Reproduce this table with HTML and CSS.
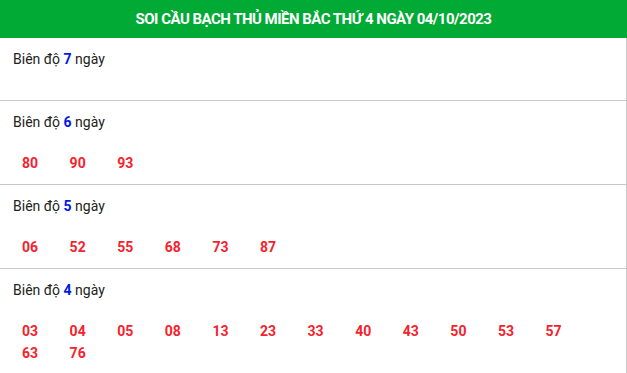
FILE: index.html
```html
<!DOCTYPE html>
<html lang="vi">
<head>
<meta charset="utf-8">
<title>Soi cầu bạch thủ</title>
<link rel="stylesheet" href="styles.css">
</head>
<body>
<div class="box">
  <h2 class="head">SOI CẦU BẠCH THỦ MIỀN BẮC THỨ 4 NGÀY 04/10/2023</h2>
  <div class="content">
    <div class="row">
      <div class="title">Biên độ <b>7</b> ngày</div>
      <div class="nums"></div>
    </div>
    <div class="row">
      <div class="title">Biên độ <b>6</b> ngày</div>
      <div class="nums"><span>80</span><span>90</span><span>93</span></div>
    </div>
    <div class="row">
      <div class="title">Biên độ <b>5</b> ngày</div>
      <div class="nums"><span>06</span><span>52</span><span>55</span><span>68</span><span>73</span><span>87</span></div>
    </div>
    <div class="row">
      <div class="title">Biên độ <b>4</b> ngày</div>
      <div class="nums"><span>03</span><span>04</span><span>05</span><span>08</span><span>13</span><span>23</span><span>33</span><span>40</span><span>43</span><span>50</span><span>53</span><span>57</span><span>63</span><span>76</span></div>
    </div>
  </div>
</div>
</body>
</html>
```
FILE: styles.css
```css
html, body {
  margin: 0;
  padding: 0;
  background: #fff;
  font-family: Roboto, "Liberation Sans", sans-serif;
}
.box {
  width: 627px;
}
.head {
  margin: 0;
  height: 38px;
  line-height: 38px;
  background: #00aa34;
  color: #fff;
  text-align: center;
  font-size: 15px;
  font-weight: 700;
  letter-spacing: -0.52px;
}
.content {
  border-right: 1px solid #c8c8c8;
}
.row {
  padding: 11px 0 10px 13px;
  border-bottom: 1px solid #c8c8c8;
}
.title {
  font-size: 14px;
  line-height: 20px;
  color: #222;
}
.title b {
  color: #0018e0;
  font-weight: 700;
}
.nums {
  margin-top: 21px;
  padding-left: 9px;
  display: flex;
  flex-wrap: wrap;
  row-gap: 1px;
}
.nums span {
  width: 47.6px;
  font-size: 14px;
  line-height: 21px;
  font-weight: 700;
  color: #f5222d;
}
```
